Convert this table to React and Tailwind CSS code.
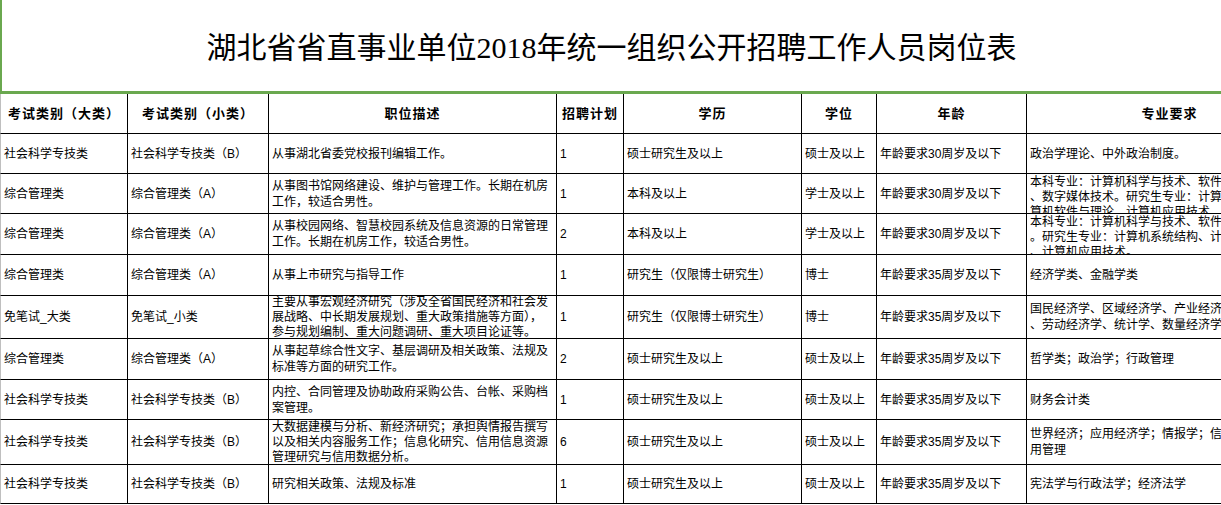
import React from "react";

const cols = "grid-cols-[128px_141px_288px_67px_178px_75px_150px_286px]";

const headers = [
  "考试类别（大类）",
  "考试类别（小类）",
  "职位描述",
  "招聘计划",
  "学历",
  "学位",
  "年龄",
  "专业要求",
];

const rows = [
  {
    h: "h-[40px]",
    big: "社会科学专技类",
    small: "社会科学专技类（B）",
    desc: ["从事湖北省委党校报刊编辑工作。"],
    num: "1",
    edu: "硕士研究生及以上",
    degree: "硕士及以上",
    age: "年龄要求30周岁及以下",
    major: ["政治学理论、中外政治制度。"],
  },
  {
    h: "h-[40px]",
    big: "综合管理类",
    small: "综合管理类（A）",
    desc: ["从事图书馆网络建设、维护与管理工作。长期在机房", "工作，较适合男性。"],
    num: "1",
    edu: "本科及以上",
    degree: "学士及以上",
    age: "年龄要求30周岁及以下",
    major: [
      "本科专业：计算机科学与技术、软件工程、网络工程",
      "、数字媒体技术。研究生专业：计算机系统结构、计",
      "算机软件与理论、计算机应用技术。",
    ],
    clip: true,
  },
  {
    h: "h-[41px]",
    big: "综合管理类",
    small: "综合管理类（A）",
    desc: ["从事校园网络、智慧校园系统及信息资源的日常管理", "工作。长期在机房工作，较适合男性。"],
    num: "2",
    edu: "本科及以上",
    degree: "学士及以上",
    age: "年龄要求30周岁及以下",
    major: [
      "本科专业：计算机科学与技术、软件工程、网络工程",
      "。研究生专业：计算机系统结构、计算机软件与理论",
      "、计算机应用技术。",
    ],
    clip: true,
  },
  {
    h: "h-[41px]",
    big: "综合管理类",
    small: "综合管理类（A）",
    desc: ["从事上市研究与指导工作"],
    num: "1",
    edu: "研究生（仅限博士研究生）",
    degree: "博士",
    age: "年龄要求35周岁及以下",
    major: ["经济学类、金融学类"],
  },
  {
    h: "h-[43px]",
    big: "免笔试_大类",
    small: "免笔试_小类",
    desc: [
      "主要从事宏观经济研究（涉及全省国民经济和社会发",
      "展战略、中长期发展规划、重大政策措施等方面），",
      "参与规划编制、重大问题调研、重大项目论证等。",
    ],
    num: "1",
    edu: "研究生（仅限博士研究生）",
    degree: "博士",
    age: "年龄要求35周岁及以下",
    major: ["国民经济学、区域经济学、产业经济学、国际贸易学", "、劳动经济学、统计学、数量经济学"],
  },
  {
    h: "h-[41px]",
    big: "综合管理类",
    small: "综合管理类（A）",
    desc: ["从事起草综合性文字、基层调研及相关政策、法规及", "标准等方面的研究工作。"],
    num: "2",
    edu: "硕士研究生及以上",
    degree: "硕士及以上",
    age: "年龄要求35周岁及以下",
    major: ["哲学类；政治学；行政管理"],
  },
  {
    h: "h-[40px]",
    big: "社会科学专技类",
    small: "社会科学专技类（B）",
    desc: ["内控、合同管理及协助政府采购公告、台帐、采购档", "案管理。"],
    num: "1",
    edu: "硕士研究生及以上",
    degree: "硕士及以上",
    age: "年龄要求35周岁及以下",
    major: ["财务会计类"],
  },
  {
    h: "h-[45px]",
    big: "社会科学专技类",
    small: "社会科学专技类（B）",
    desc: [
      "大数据建模与分析、新经济研究；承担舆情报告撰写",
      "以及相关内容服务工作；信息化研究、信用信息资源",
      "管理研究与信用数据分析。",
    ],
    num: "6",
    edu: "硕士研究生及以上",
    degree: "硕士及以上",
    age: "年龄要求35周岁及以下",
    major: ["世界经济；应用经济学；情报学；信", "用管理"],
  },
  {
    h: "h-[39px]",
    big: "社会科学专技类",
    small: "社会科学专技类（B）",
    desc: ["研究相关政策、法规及标准"],
    num: "1",
    edu: "硕士研究生及以上",
    degree: "硕士及以上",
    age: "年龄要求35周岁及以下",
    major: ["宪法学与行政法学；经济法学"],
  },
];

function Cell({ lines, clip, first }) {
  const list = Array.isArray(lines) ? lines : [lines];
  const lead = list.length >= 3 ? "leading-[15px]" : "leading-[16px]";
  return (
    <div
      className={`flex flex-col overflow-hidden border-b border-r border-black px-[3px] ${
        clip ? "justify-start pt-[1px]" : "justify-center"
      } ${first ? "border-l border-l-[#bfbfbf]" : ""}`}
    >
      {list.map((t, i) => (
        <div key={i} className={`whitespace-nowrap ${lead}`}>
          {t}
        </div>
      ))}
    </div>
  );
}

export default function App() {
  return (
    <div
      className="h-[505px] w-full overflow-hidden bg-white text-[12px] text-black"
      style={{ fontFamily: '"Liberation Sans", "Noto Sans CJK SC", sans-serif' }}
    >
      <div className="w-[1313px]">
        <div className="flex h-[91px] w-[1221px] items-center justify-center border-l-2 border-[#6aa84f] pt-[4px]">
          <h1
            className="text-[30px] font-normal tracking-[0px]"
            style={{ fontFamily: '"Liberation Serif", "Noto Sans CJK SC", serif' }}
          >
            湖北省省直事业单位2018年统一组织公开招聘工作人员岗位表
          </h1>
        </div>
        <div className="h-[3px] w-full bg-[#6aa84f]" />

        <div className={`grid ${cols} h-[40px]`}>
          {headers.map((h, i) => (
            <div
              key={h}
              className={`flex items-center justify-center border-b border-r border-black text-[13px] font-bold tracking-[1px] ${
                i === 0 ? "border-l border-l-[#bfbfbf]" : ""
              }`}
            >
              {h}
            </div>
          ))}
        </div>

        {rows.map((r, i) => (
          <div key={i} className={`grid ${cols} ${r.h}`}>
            <Cell lines={r.big} first />
            <Cell lines={r.small} />
            <Cell lines={r.desc} />
            <Cell lines={r.num} />
            <Cell lines={r.edu} />
            <Cell lines={r.degree} />
            <Cell lines={r.age} />
            <Cell lines={r.major} clip={r.clip} />
          </div>
        ))}
      </div>
    </div>
  );
}
